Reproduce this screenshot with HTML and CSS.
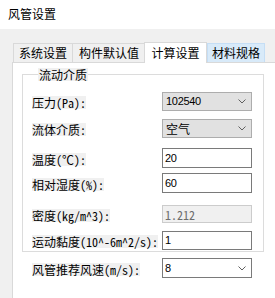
FILE: index.html
```html
<!DOCTYPE html>
<html lang="zh">
<head>
<meta charset="utf-8">
<link rel="stylesheet" href="styles.css">
</head>
<body>
<div class="window">
  <div class="titlebar">风管设置</div>
  <div class="client">
    <div class="tabs">
      <div class="tab t1">系统设置</div>
      <div class="tab t2">构件默认值</div>
      <div class="tab active">计算设置</div>
      <div class="tab hover">材料规格</div>
    </div>
    <div class="pane">
      <fieldset class="group">
        <legend class="legend">流动介质</legend>
        <div class="row r1">
          <span class="lbl">压力(Pa):</span>
          <div class="combo"><span class="val num">102540</span><svg class="chev" width="8" height="5" viewBox="0 0 8 5"><polyline points="0.5,0.5 4,4 7.5,0.5" fill="none" stroke="#606060" stroke-width="1"/></svg></div>
        </div>
        <div class="row r2">
          <span class="lbl">流体介质:</span>
          <div class="combo"><span class="val song">空气</span><svg class="chev" width="8" height="5" viewBox="0 0 8 5"><polyline points="0.5,0.5 4,4 7.5,0.5" fill="none" stroke="#606060" stroke-width="1"/></svg></div>
        </div>
        <div class="row r3">
          <span class="lbl">温度(℃):</span>
          <div class="input"><span class="num">20</span></div>
        </div>
        <div class="row r4">
          <span class="lbl">相对湿度(%):</span>
          <div class="input"><span class="num">60</span></div>
        </div>
        <div class="row r5">
          <span class="lbl">密度(kg/m^3):</span>
          <div class="input disabled"><span class="song">1.212</span></div>
        </div>
        <div class="row r6">
          <span class="lbl">运动黏度(10^-6m^2/s):</span>
          <div class="input"><span class="num">1</span></div>
        </div>
      </fieldset>
      <div class="row r7">
        <span class="lbl">风管推荐风速(m/s):</span>
        <div class="combo edit"><span class="val num">8</span><svg class="chev" width="8" height="5" viewBox="0 0 8 5"><polyline points="0.5,0.5 4,4 7.5,0.5" fill="none" stroke="#606060" stroke-width="1"/></svg></div>
      </div>
    </div>
  </div>
</div>
</body>
</html>
```
FILE: styles.css
```css
html, body {
  margin: 0;
  padding: 0;
  width: 275px;
  height: 298px;
  overflow: hidden;
  background: #f0f0f0;
}
.window {
  width: 275px;
  height: 298px;
  overflow: hidden;
  font-family: "Noto Sans CJK SC", "Noto Sans", sans-serif;
  font-size: 12px;
  color: #000;
}
.titlebar {
  height: 29px;
  background: #ffffff;
  padding-left: 8px;
  line-height: 28px;
  box-sizing: border-box;
}
.client {
  padding-left: 12px;
  padding-top: 13px;
  height: 269px;
  box-sizing: border-box;
  overflow: hidden;
}
.tabs {
  display: flex;
  align-items: flex-end;
  height: 20px;
  padding-left: 1px;
  position: relative;
  z-index: 1;
}
.tab {
  box-sizing: border-box;
  height: 19px;
  border: 1px solid #d9d9d9;
  border-bottom: none;
  background: #f0f0f0;
  line-height: 17px;
  text-align: center;
  white-space: nowrap;
}
.t1 { width: 60px; }
.t2 { width: 74px; margin-left: -1px; }
.tab.active {
  width: 63px;
  height: 21px;
  margin-left: -2px;
  margin-bottom: -1px;
  background: #ffffff;
  line-height: 19px;
  position: relative;
  z-index: 2;
}
.tab.hover {
  width: 58px;
  background: #d8eaf9;
  border-color: #c5def5;
}
.pane {
  box-sizing: border-box;
  width: 300px;
  height: 260px;
  background: #ffffff;
  border: 1px solid #d9d9d9;
  padding-left: 9px;
  padding-top: 5px;
}
.group {
  box-sizing: border-box;
  width: 242px;
  margin: 0;
  padding: 0 0 1px 9px;
  border: 1px solid #dcdcdc;
  min-width: 0;
}
.legend {
  margin-left: 6px;
  padding: 0 1px;
  line-height: 13px;
  height: 13px;
  background: #f0f0f0;
}
.row {
  display: grid;
  grid-template-columns: 130px 90px;
  align-items: center;
}
.pane > .row { padding-left: 10px; }
.r1 { margin-top: 11px; height: 19px; }
.r2 { margin-top: 8px; height: 19px; }
.r3 { margin-top: 10px; height: 20px; }
.r4 { margin-top: 5px; height: 20px; }
.r5 { margin-top: 12px; height: 18px; }
.r6 { margin-top: 8px; height: 19px; }
.r7 { margin-top: 6px; height: 20px; }
.lbl {
  justify-self: start;
  font-family: "Noto Sans Mono CJK SC", "Noto Sans CJK SC", monospace;
  background: #f0f0f0;
  line-height: 13px;
  height: 13px;
  white-space: nowrap;
  margin-top: 2px;
}
.combo, .input {
  box-sizing: border-box;
  height: 100%;
  display: flex;
  align-items: center;
  justify-content: space-between;
  padding-left: 3px;
  padding-right: 5px;
}
.combo {
  background: #e1e1e1;
  border: 1px solid #adadad;
}
.combo.edit {
  background: #ffffff;
  border-color: #7a7a7a;
  padding-left: 2px;
}
.input {
  background: #ffffff;
  border: 1px solid #7a7a7a;
  padding-left: 2px;
}
.input.disabled {
  background: #f0f0f0;
  border-color: #cccccc;
  color: #6d6d6d;
}
.num {
  font-family: "Liberation Sans", Arial, sans-serif;
  font-size: 11px;
  letter-spacing: -0.3px;
  line-height: 13px;
}
.song {
  font-family: "Noto Sans Mono CJK SC", "Noto Sans CJK SC", monospace;
  font-size: 12px;
  line-height: 13px;
}
.val { line-height: 13px; }
.chev { display: block; flex: none; }
```
